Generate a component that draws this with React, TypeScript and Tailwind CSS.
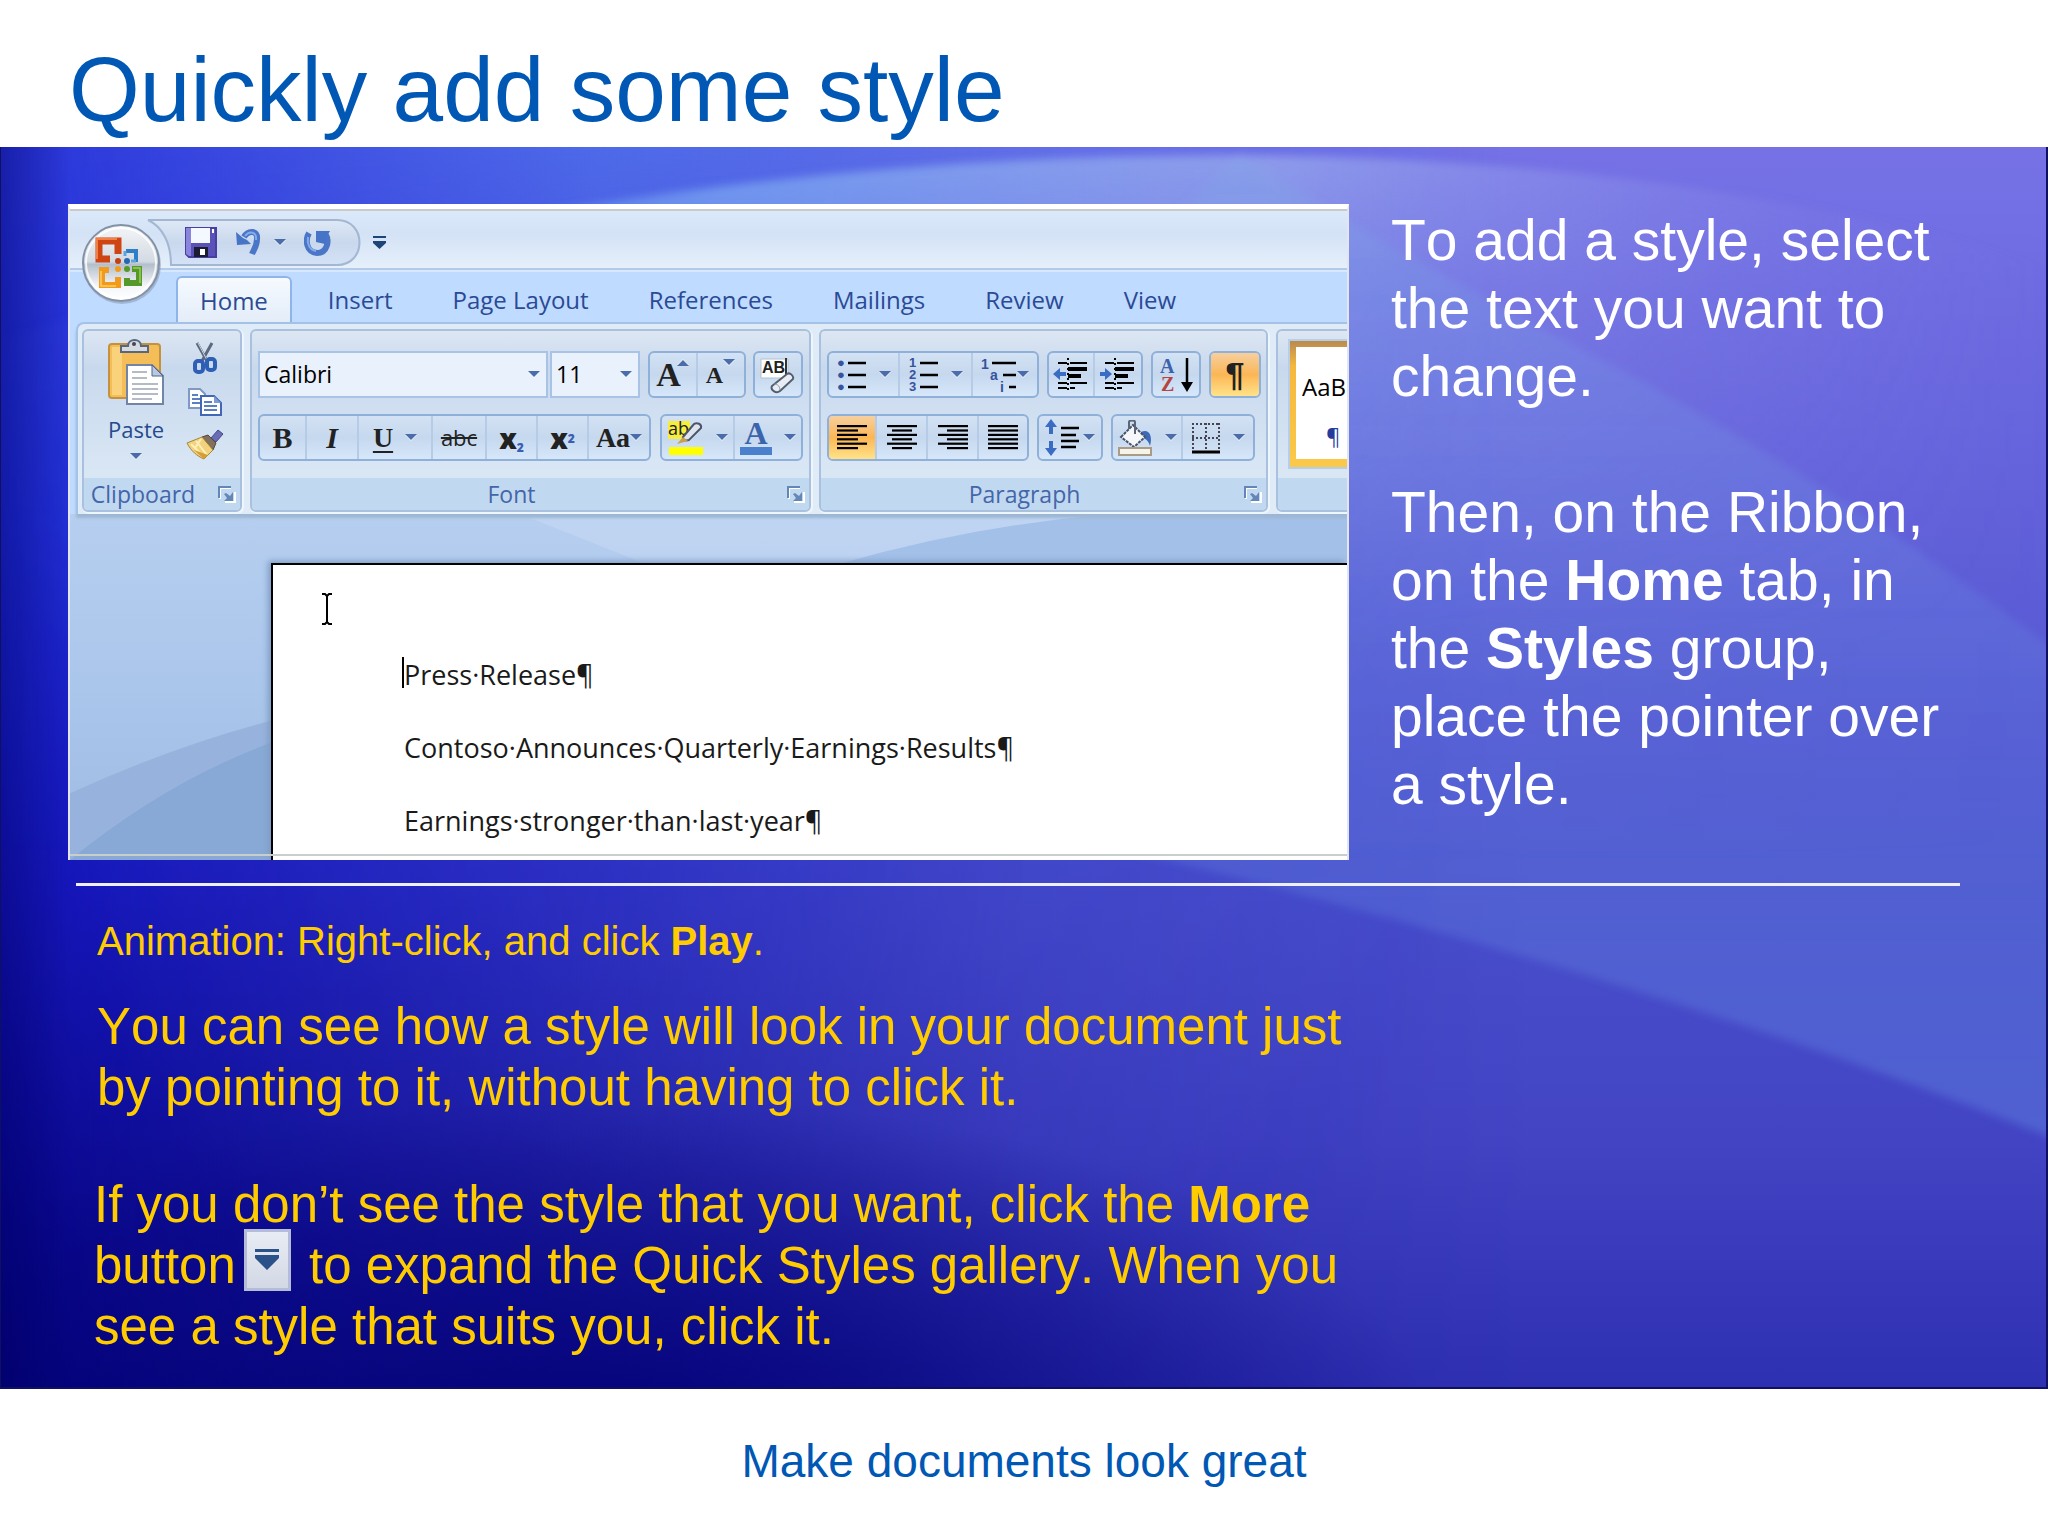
import type { ReactNode } from "react";
import clsx from "clsx";

const tabs = ["Insert", "Page Layout", "References", "Mailings", "Review", "View"];
const lines = ["Press·Release¶", "Contoso·Announces·Quarterly·Earnings·Results¶", "Earnings·stronger·than·last·year¶"];

function Arrow({ className }: { className?: string }) {
  return (
    <svg width="12" height="7" viewBox="0 0 12 7" className={clsx("shrink-0", className)}>
      <path d="M0 1h12L6 7z" fill="#fff" opacity=".7" />
      <path d="M0 0h12L6 6z" fill="#4a6cab" />
    </svg>
  );
}

function Launcher() {
  return (
    <button aria-label="More options">
      <svg width="18" height="17" viewBox="0 0 18 17" fill="none">
        <path d="M2 13V2h11" stroke="#fff" strokeWidth="2" />
        <path d="M1 12V1h12" stroke="#6487b8" strokeWidth="2" />
        <path d="M17 6v10H7" stroke="#fff" strokeWidth="2" />
        <path d="M15 6v9H6l3-3-3-4 2-1 4 3z" fill="#6487b8" />
      </svg>
    </button>
  );
}

function Group({ label, launcher = true, className, children }: { label: string; launcher?: boolean; className: string; children: ReactNode }) {
  return (
    <section
      aria-label={label || "Styles"}
      className={clsx(
        "flex shrink-0 flex-col overflow-hidden rounded-md border-2 border-[#a9c1de] bg-linear-to-b from-[#dde7f3] from-0% via-[#c9d9ed] via-20% to-[#d9e7f5] to-80% shadow-[1px_1px_0_1px_#eef6fd]",
        className
      )}
    >
      <div className="h-[147px]">{children}</div>
      <div className="flex h-8 items-center bg-[#c1d8f1] px-1 text-[#4466a8]">
        <span className="flex-1 pr-5 text-center">{label}</span>
        {launcher && <Launcher />}
      </div>
    </section>
  );
}

function Tools({ children }: { children: ReactNode }) {
  return (
    <div className="flex h-[47px] shrink-0 divide-x-2 divide-[#b5cbe6] overflow-hidden rounded-md border-2 border-[#8fb0d8] bg-linear-to-b from-[#d3e2f4] from-0% via-[#c6d8ee] via-50% to-[#d6e7fa] to-100%">
      {children}
    </div>
  );
}

function Tool({ name, w, on, menu, children }: { name: string; w: string; on?: boolean; menu?: boolean; children: ReactNode }) {
  return (
    <button
      aria-label={name}
      className={clsx(
        "flex shrink-0 items-center justify-center gap-3 font-['Liberation_Serif',serif] font-bold text-[#222]",
        w,
        on && "bg-linear-to-b from-[#f6cf9d] from-0% via-[#fbb654] via-50% to-[#ffe389] to-100%"
      )}
    >
      {children}
      {menu && <Arrow />}
    </button>
  );
}

// horizontal strokes of a paragraph, each one [x, width]
function Bars({ rows }: { rows: number[][] }) {
  return (
    <svg width="30" height="28" viewBox="0 0 30 28">
      {rows.map(([x, w], i) => (
        <rect key={i} x={x} y={1 + i * 4.4} width={w} height="2.200" fill="#000" />
      ))}
    </svg>
  );
}

function Indent({ right }: { right?: boolean }) {
  return (
    <svg width="36" height="36" viewBox="0 0 36 36">
      <path d="M5 6h9M17 6h17M5 26h9M17 26h17M5 31h9M17 31h5" stroke="#000" strokeWidth="2" />
      <path d="M15 1v34" stroke="#000" strokeWidth="2" strokeDasharray="2 3" />
      <path d="M15 10h19v4H15zM15 17h13v4H15z" fill="#000" />
      {right ? <path d="M12 17L5 11v4H0v4h5v4z" fill="#3a6cc4" /> : <path d="M0 17l7-6v4h6v4H7v4z" fill="#3a6cc4" />}
    </svg>
  );
}

function SaveIcon() {
  return (
    <svg width="32" height="31" viewBox="0 0 32 31">
      <path d="M1 1h30v29H4l-3-3z" fill="#5a52b8" stroke="#4840a0" strokeWidth="2" />
      <path d="M1 1h5v28H4l-3-2z" fill="#8a84dc" />
      <path d="M6 1h19v15H6z" fill="#f4f8ff" />
      <path d="M9 20h14v10H9z" fill="#1c1c30" />
      <path d="M15 22h5v6h-5z" fill="#fff" />
      <path d="M27 2h2v4h-2z" fill="#fff" />
    </svg>
  );
}

function UndoIcon() {
  return (
    <svg width="27" height="29" viewBox="0 0 27 29" fill="none">
      <path d="M9 9C13 2 23 2 22 11c0 7-3 10-5 15" stroke="#4a76c8" strokeWidth="6" />
      <path d="M10 8C14 3 22 3 21 12" stroke="#86abea" strokeWidth="2" />
      <path d="M1 4l1 13 14-1-4-4-4-2z" fill="#4674c6" />
    </svg>
  );
}

function RedoIcon() {
  return (
    <svg width="28" height="28" viewBox="0 0 28 28" fill="none">
      <path d="M5 4C1 11 2 23 13 24c11 0 12-13 9-18" stroke="#4a76c8" strokeWidth="6" />
      <path d="M4 8C3 14 5 21 12 22" stroke="#86abea" strokeWidth="2" />
      <path d="M12 2h14l-3 5-2 8-9-2z" fill="#4674c6" />
    </svg>
  );
}

function OfficeOrb() {
  return (
    <svg width="82" height="84" viewBox="0 0 82 84">
      <defs>
        <linearGradient id="orb" x1="0" y1="0" x2="0" y2="1">
          <stop offset="0" stopColor="#f4f6f8" />
          <stop offset=".48" stopColor="#d3dae2" />
          <stop offset=".52" stopColor="#b4bfcc" />
          <stop offset=".8" stopColor="#f4f6f9" />
          <stop offset="1" stopColor="#fff" />
        </linearGradient>
      </defs>
      <circle cx="42" cy="43" r="39" fill="#7d8ba0" opacity=".45" />
      <circle cx="41" cy="41" r="38" fill="url(#orb)" stroke="#8391a6" strokeWidth="2" />
      <circle cx="41" cy="41" r="35" fill="none" stroke="#fff" strokeWidth="2" opacity=".8" />
      <g fill="none">
        <path d="M30 37H19V19h19v13" stroke="#cf4413" strokeWidth="7" />
        <path d="M17 37V17h20" stroke="#f08044" strokeWidth="2" />
        <path d="M46 29h10v11" stroke="#2f7fc8" strokeWidth="4" />
        <path d="M45 29v5M56 39h-5" stroke="#5aa4e0" strokeWidth="3" />
        <path d="M29 48H22v15h16V55" stroke="#f29a1c" strokeWidth="6" />
        <path d="M21 49v15h15" stroke="#ffd060" strokeWidth="1.500" />
        <path d="M52 47h7v14H47v-5" stroke="#55992b" strokeWidth="6" />
        <path d="M53 46h7v15" stroke="#9ccc58" strokeWidth="1.500" />
      </g>
      <circle cx="38" cy="39" r="3" fill="#c63f12" />
      <circle cx="47" cy="39" r="3" fill="#2468b4" />
      <circle cx="38" cy="47" r="3" fill="#f29a1c" />
      <circle cx="47" cy="47" r="3" fill="#55992b" />
    </svg>
  );
}

function PasteIcon() {
  return (
    <svg width="56" height="66" viewBox="0 0 56 66">
      <rect x="1" y="5" width="51" height="54" rx="3" fill="#f4bd57" stroke="#c4923c" strokeWidth="2" />
      <path d="M4 8h10v48H4z" fill="#fbd27c" />
      <path d="M13 13V7h7c0-8 13-8 13 0h7v6z" fill="#d6dbe2" stroke="#58677d" strokeWidth="2" />
      <circle cx="26" cy="5" r="2" fill="#445" />
      <path d="M19 26h25l11 11v28H19z" fill="#fff" stroke="#7385a6" strokeWidth="2" />
      <path d="M44 26v11h11z" fill="#b8c8e0" stroke="#51658a" />
      <path d="M24 33h15M24 39h15M24 45h26M24 50h26M24 55h26M24 60h20" stroke="#b4bac6" strokeWidth="2" />
    </svg>
  );
}

function CutIcon() {
  return (
    <svg width="24" height="34" viewBox="0 0 24 34" fill="none">
      <path d="M4 2l10 18M19 2L9 20" stroke="#5c6a80" strokeWidth="3" />
      <path d="M5 2l9 17" stroke="#cdd5e0" strokeWidth="1" />
      <rect x="2" y="20" width="8" height="11" rx="3" stroke="#2f5fb4" strokeWidth="4" />
      <rect x="14" y="18" width="8" height="11" rx="3" stroke="#2f5fb4" strokeWidth="4" />
    </svg>
  );
}

function CopyIcon() {
  return (
    <svg width="34" height="28" viewBox="0 0 34 28" strokeWidth="2">
      <path d="M1 1h11l5 5v14H1z" fill="#fff" stroke="#8098c4" />
      <path d="M4 7h6M4 11h8M4 15h8" stroke="#5a80c4" />
      <path d="M13 8h13l7 7v12H13z" fill="#fff" stroke="#4068b4" />
      <path d="M16 14h8M16 18h13M16 22h13" stroke="#5a80c4" />
      <path d="M26 8v7h7z" fill="#7c9cd4" />
    </svg>
  );
}

function PainterIcon() {
  return (
    <svg width="38" height="31" viewBox="0 0 38 31">
      <path d="M25 9l7-8 5 4-7 8z" fill="#6a6cb4" stroke="#44488c" />
      <path d="M16 8l6-2 8 8-3 7z" fill="#80705c" stroke="#54483c" />
      <path d="M1 14l15-6 11 13-9 9c-7-3-13-8-17-16z" fill="#f2d27c" stroke="#a88438" />
      <path d="M5 15l9 9M10 12l11 14M15 10l-6 9" stroke="#fff0b8" strokeWidth="2" />
      <path d="M8 21l10 9 4-4z" fill="#d49e34" />
    </svg>
  );
}

function ClearIcon() {
  return (
    <svg width="36" height="38" viewBox="0 0 36 38">
      <path d="M1 3h27v19H1z" fill="#fff" stroke="#b4c0d0" />
      <path d="M26 2v20" stroke="#333" strokeWidth="2" />
      <text x="2" y="17" fontSize="16" fontWeight="bold" fontFamily="Liberation Sans, sans-serif" fill="#222">AB</text>
      <path d="M12 30L27 18c3-2 7 2 6 5L20 35c-4 3-10-1-8-5z" fill="#e9edf3" stroke="#545e70" strokeWidth="2" />
      <path d="M14 28c4 0 6 3 6 6" stroke="#8893a6" fill="none" />
    </svg>
  );
}

function HighlightIcon() {
  return (
    <svg width="36" height="36" viewBox="0 0 36 36">
      <path d="M0 1h22v18H0z" fill="#f6ee3c" />
      <text x="0" y="15" fontSize="18" fontFamily="Open Sans, sans-serif" fontWeight="normal" fill="#222">ab</text>
      <path d="M15 17L26 4c3-2 8 0 7 4L21 20c-3 1-7 0-6-3z" fill="#dfe5ee" stroke="#4c566a" strokeWidth="2" />
      <path d="M9 24l6-7 5 4z" fill="#c8a050" />
      <path d="M1 27h34v8H1z" fill="#ffff00" />
    </svg>
  );
}

function ListIcon({ marks }: { marks: string[] }) {
  return (
    <svg width="30" height="36" viewBox="0 0 30 36">
      {marks.map((m, i) => (
        <text key={i} x="0" y={10 + i * 12} fontSize="13" fontWeight="bold" fontFamily="Liberation Sans, sans-serif" fill="#36539e">{m}</text>
      ))}
      <path d="M11 6h18M11 18h18M11 30h18" stroke="#000" strokeWidth="2.500" />
    </svg>
  );
}

function MultiListIcon() {
  return (
    <svg width="36" height="36" viewBox="0 0 36 36" fontSize="14" fontWeight="bold" fontFamily="Liberation Sans, sans-serif" fill="#36539e">
      <text x="0" y="12">1</text>
      <text x="9" y="23">a</text>
      <text x="19" y="35">i</text>
      <path d="M11 6h24M22 18h13M28 30h7" stroke="#000" strokeWidth="2.500" />
    </svg>
  );
}

function SortIcon() {
  return (
    <svg width="34" height="36" viewBox="0 0 34 36" fontSize="20" fontWeight="bold" fontFamily="Liberation Serif, serif">
      <text x="1" y="16" fill="#3b62ad">A</text>
      <text x="2" y="34" fill="#b5433f">Z</text>
      <path d="M28 1v28" stroke="#000" strokeWidth="2.500" />
      <path d="M22 25h12l-6 10z" fill="#000" />
    </svg>
  );
}

function SpacingIcon() {
  return (
    <svg width="34" height="38" viewBox="0 0 34 38">
      <path d="M6 0l6 8H8v7H4V8H0zM6 37l6-8H8v-7H4v7H0z" fill="#3a6cc4" />
      <path d="M16 9h18M16 16h15M16 22h18M16 28h15" stroke="#000" strokeWidth="2.500" />
    </svg>
  );
}

function BucketIcon() {
  return (
    <svg width="36" height="36" viewBox="0 0 36 36">
      <path d="M24 12c8-4 12 4 9 14-1-5-5-8-9-9z" fill="#3c6ab8" />
      <path d="M4 17L16 5l12 12-11 10z" fill="#f5f7fa" stroke="#46536a" strokeWidth="2" strokeDasharray="3 1" />
      <path d="M12 9V2c0-2 6-2 6 0v12" fill="none" stroke="#5c6678" strokeWidth="2" />
      <path d="M2 28h32v7H2z" fill="#f6f3ea" stroke="#a89c84" strokeWidth="2" />
    </svg>
  );
}

function BorderIcon() {
  return (
    <svg width="30" height="32" viewBox="0 0 30 32" stroke="#445" strokeWidth="2" fill="none">
      <path d="M1 2h28M1 16h28M2 1v26M15 1v26M28 1v26" strokeDasharray="2 2" />
      <path d="M1 30h28" stroke="#000" strokeWidth="3" />
    </svg>
  );
}

function MoreGlyph({ className }: { className?: string }) {
  return (
    <svg width="13" height="14" viewBox="0 0 13 14" className={className}>
      <path d="M0 1h13v2H0zM0 6h13v2L6.500 14 0 8z" fill="#1d4578" />
    </svg>
  );
}

function Ribbon() {
  return (
    <div className="relative z-10 ml-1.5 flex gap-2 rounded-tl-lg border-t-2 border-l-2 border-[#a4c2e8] bg-[#dfebf7] pt-[5px] pb-0.5 pl-1 shadow-[0_4px_3px_#9db7d3]">
      <Group label="Clipboard" className="w-[160px]">
        <div className="flex justify-between pt-2 pr-4 pl-6">
          <button className="flex flex-col items-center text-[#264a8c]">
            <PasteIcon />
            <span className="mt-2 text-[22px] leading-8">Paste</span>
            <Arrow className="mt-2" />
          </button>
          <div className="flex flex-col items-center justify-between pt-0.5">
            <button aria-label="Cut"><CutIcon /></button>
            <button aria-label="Copy"><CopyIcon /></button>
            <button aria-label="Format Painter"><PainterIcon /></button>
          </div>
        </div>
      </Group>

      <Group label="Font" className="w-[561px]">
        <div className="flex flex-col gap-4 px-1.5 pt-5">
          <div className="flex justify-between">
            <div className="flex gap-0.5">
              <label className="relative flex items-center">
                <select aria-label="Font name" className="h-[47px] w-[290px] appearance-none border-2 border-[#a9c3e6] bg-[#e9f1fc] pl-1 text-black">
                  <option>Calibri</option>
                </select>
                <Arrow className="pointer-events-none absolute right-2" />
              </label>
              <label className="relative flex items-center">
                <select aria-label="Font size" className="h-[47px] w-[90px] appearance-none border-2 border-[#a9c3e6] bg-[#e9f1fc] pl-1 text-black">
                  <option>11</option>
                </select>
                <Arrow className="pointer-events-none absolute right-2" />
              </label>
            </div>
            <Tools>
              <Tool name="Grow Font" w="w-12">
                <span className="flex items-start text-[34px] leading-9">A<Arrow className="-ml-1 mt-0.5 rotate-180" /></span>
              </Tool>
              <Tool name="Shrink Font" w="w-[46px]">
                <span className="flex items-start text-[24px] leading-10">A<Arrow className="mt-1" /></span>
              </Tool>
            </Tools>
            <Tools>
              <Tool name="Clear Formatting" w="w-[46px]"><ClearIcon /></Tool>
            </Tools>
          </div>
          <div className="flex justify-between">
            <Tools>
              <Tool name="Bold" w="w-[47px]"><span className="text-[30px]">B</span></Tool>
              <Tool name="Italic" w="w-[52px]"><span className="text-[30px] italic">I</span></Tool>
              <Tool name="Underline" w="w-[74px]" menu><span className="text-[28px] underline underline-offset-4">U</span></Tool>
              <Tool name="Strikethrough" w="w-[54px]"><span className="font-['Open_Sans',sans-serif] text-[22px] font-medium line-through">abc</span></Tool>
              <Tool name="Subscript" w="w-[51px]">
                <span className="font-['Open_Sans',sans-serif] text-[28px] leading-8 font-extrabold">x<sub className="text-[12px] text-[#3a5fb0]">2</sub></span>
              </Tool>
              <Tool name="Superscript" w="w-[51px]">
                <span className="font-['Open_Sans',sans-serif] text-[28px] leading-8 font-extrabold">x<sup className="text-[12px] text-[#3a5fb0]">2</sup></span>
              </Tool>
              <Tool name="Change Case" w="w-[60px]"><span className="flex items-center text-[28px]">Aa<Arrow /></span></Tool>
            </Tools>
            <Tools>
              <Tool name="Text Highlight Color" w="w-[73px]" menu><HighlightIcon /></Tool>
              <Tool name="Font Color" w="w-[66px]" menu>
                <span className="border-b-8 border-[#4a80cc] px-1 text-[32px] leading-[27px] text-[#3a64ac]">A</span>
              </Tool>
            </Tools>
          </div>
        </div>
      </Group>

      <Group label="Paragraph" className="w-[449px]">
        <div className="flex flex-col gap-4 px-1.5 pt-5">
          <div className="flex gap-2">
            <Tools>
              <Tool name="Bullets" w="w-[71px]" menu><ListIcon marks={["●", "●", "●"]} /></Tool>
              <Tool name="Numbering" w="w-[73px]" menu><ListIcon marks={["1", "2", "3"]} /></Tool>
              <Tool name="Multilevel List" w="w-[64px]"><span className="flex items-center"><MultiListIcon /><Arrow /></span></Tool>
            </Tools>
            <Tools>
              <Tool name="Decrease Indent" w="w-[46px]"><Indent /></Tool>
              <Tool name="Increase Indent" w="w-[46px]"><Indent right /></Tool>
            </Tools>
            <Tools>
              <Tool name="Sort" w="w-[46px]"><SortIcon /></Tool>
            </Tools>
            <Tools>
              <Tool name="Show Marks" w="w-12" on><span className="font-['Liberation_Sans',sans-serif] text-[34px]">¶</span></Tool>
            </Tools>
          </div>
          <div className="flex gap-2">
            <Tools>
              <Tool name="Align Left" w="w-12" on><Bars rows={[[0, 30], [0, 21], [0, 30], [0, 21], [0, 30], [0, 21]]} /></Tool>
              <Tool name="Center" w="w-[51px]"><Bars rows={[[0, 30], [5, 20], [0, 30], [5, 20], [0, 30], [5, 20]]} /></Tool>
              <Tool name="Align Right" w="w-[51px]"><Bars rows={[[0, 30], [9, 21], [0, 30], [9, 21], [0, 30], [9, 21]]} /></Tool>
              <Tool name="Justify" w="w-12"><Bars rows={[[0, 30], [0, 30], [0, 30], [0, 30], [0, 30], [0, 30]]} /></Tool>
            </Tools>
            <Tools>
              <Tool name="Line Spacing" w="w-[62px]"><span className="flex items-center gap-1"><SpacingIcon /><Arrow /></span></Tool>
            </Tools>
            <Tools>
              <Tool name="Shading" w="w-[70px]" menu><BucketIcon /></Tool>
              <Tool name="Borders" w="w-[70px]" menu><BorderIcon /></Tool>
            </Tools>
          </div>
        </div>
      </Group>

      <Group label="" launcher={false} className="w-[240px]">
        <div className="pt-2 pl-2.5">
          <button className="flex h-[130px] w-[180px] flex-col border-2 border-[#b8cde6] bg-linear-to-b from-[#b98b4e] from-0% via-[#f5b83c] via-20% to-[#fbc94a] to-100% pt-1.5 pb-2 pl-1.5 text-left text-black">
            <span className="flex flex-1 flex-col justify-between bg-white pt-6 pb-3 pl-1.5">
              <span className="text-[24px] leading-8">AaBbCc</span>
              <span className="pl-6 text-[22px] leading-6 text-[#263c9c]">¶ Normal</span>
            </span>
          </button>
        </div>
      </Group>
    </div>
  );
}

function WordWindow() {
  return (
    <div className="relative min-w-0 overflow-hidden border-2 border-t-[5px] border-b-0 border-[#e4e6ef] border-t-white bg-[#bfdbff] font-['Open_Sans','Noto_Sans',sans-serif] text-[23px]">
      <div className="flex h-[61px] items-start gap-3 border-t-2 border-b-2 border-t-[#c8cacc] border-b-[#b3cbeb] bg-linear-to-b from-[#dbe9fb] from-0% via-[#d3e2f5] via-40% to-[#e6f0fb] to-100% pl-[77px]">
        <div className="relative mt-2 flex h-[47px] w-[214px] items-center">
          <svg className="absolute inset-0" width="214" height="47" viewBox="0 0 214 47">
            <defs>
              <linearGradient id="qat" x1="0" y1="0" x2="0" y2="1">
                <stop offset="0" stopColor="#dfe9f6" />
                <stop offset=".5" stopColor="#c9d8ec" />
                <stop offset="1" stopColor="#d3e2f6" />
              </linearGradient>
            </defs>
            <path d="M1 1h189c30 0 30 45 0 45H24C24 25 16 8 1 1z" fill="url(#qat)" stroke="#a3b7d2" strokeWidth="2" />
          </svg>
          <div className="relative flex items-center pl-[38px]">
            <button aria-label="Save"><SaveIcon /></button>
            <button aria-label="Undo" className="ml-[18px] flex items-center gap-3"><UndoIcon /><Arrow /></button>
            <button aria-label="Redo" className="ml-[18px]"><RedoIcon /></button>
          </div>
        </div>
        <button aria-label="Customize Quick Access Toolbar" className="mt-6"><MoreGlyph /></button>
      </div>

      <nav className="flex h-[52px] items-end gap-3 border-t-2 border-[#d8e8fc] pl-[106px] text-[24px] text-[#2b4a94]">
        <button className="-mb-0.5 h-[48px] rounded-t-md border-2 border-b-0 border-[#8fb4ea] bg-linear-to-b from-[#f6faff] to-[#e2ecf8] px-[22px]">Home</button>
        {tabs.map((tab) => (
          <button key={tab} className="h-[45px] px-6">{tab}</button>
        ))}
      </nav>
      <button aria-label="Office Button" className="absolute top-[13px] left-[10px]"><OfficeOrb /></button>

      <Ribbon />

      <div className="relative pt-[49px] pl-[201px]">
        <svg className="absolute inset-0 h-full w-full" viewBox="0 0 1277 347" preserveAspectRatio="none">
          <defs>
            <linearGradient id="desk" x1="0" y1="0" x2="0" y2="1">
              <stop offset="0" stopColor="#b6cff0" />
              <stop offset=".5" stopColor="#abc6eb" />
              <stop offset="1" stopColor="#9dbae2" />
            </linearGradient>
          </defs>
          <path d="M0 0h1277v347H0z" fill="url(#desk)" />
          <path d="M450 0H1040Q900 20 780 60H600z" fill="#c8daf3" opacity=".5" />
          <path d="M770 50Q900 12 1040 0h237v60H770z" fill="#a3c0e8" />
          <path d="M0 280Q110 230 210 205V347H0z" fill="#97b3dd" />
          <path d="M0 347Q100 265 210 226V347z" fill="#88a9d5" />
        </svg>
        <article className="relative h-[297px] border-t-2 border-l-2 border-black bg-white pt-[73px] pl-[131px] text-[27px] leading-[73px] text-[#1a1a1a] shadow-[-3px_-2px_6px_#7f9cc4]">
          <svg className="absolute top-7 left-[48px]" width="12" height="32" viewBox="0 0 12 32" fill="none" stroke="#000" strokeWidth="2">
            <path d="M1 1h3l2 2 2-2h3M6 3v26M1 31h3l2-2 2 2h3" />
          </svg>
          <span className="absolute top-[92px] left-[129px] h-[31px] w-0.5 bg-black" />
          {lines.map((line, i) => (
            <p key={i} className="whitespace-nowrap">{line}</p>
          ))}
        </article>
        <div className="absolute inset-x-0 bottom-1 h-0.5 bg-[#c9cdcc]" />
      </div>
    </div>
  );
}

function Backdrop() {
  return (
    <svg className="absolute inset-0 h-full w-full" viewBox="0 0 2048 1241" preserveAspectRatio="none">
      <defs>
        <linearGradient id="left" x1="0" y1="0" x2="0" y2="1">
          <stop offset="0" stopColor="#2834da" />
          <stop offset=".3" stopColor="#1e2ad4" />
          <stop offset=".6" stopColor="#1414b8" />
          <stop offset=".85" stopColor="#08068c" />
          <stop offset="1" stopColor="#04027a" />
        </linearGradient>
        <linearGradient id="right" x1="0" y1="0" x2="0" y2="1">
          <stop offset="0" stopColor="#7672e6" />
          <stop offset=".25" stopColor="#6664dc" />
          <stop offset=".58" stopColor="#4a50cc" />
          <stop offset=".8" stopColor="#4244c4" />
          <stop offset="1" stopColor="#2e30b2" />
        </linearGradient>
        <linearGradient id="fade" x1="0" y1="0" x2="1" y2="0">
          <stop offset="0" stopColor="#000" />
          <stop offset=".25" stopColor="#606060" />
          <stop offset=".5" stopColor="#d4d4d4" />
          <stop offset=".75" stopColor="#fff" />
          <stop offset="1" stopColor="#fff" />
        </linearGradient>
        <mask id="toRight"><path d="M0 0h2048v1241H0z" fill="url(#fade)" /></mask>
        <radialGradient id="pool" cx=".3" cy="1.050" r=".4">
          <stop offset="0" stopColor="#04027a" stopOpacity=".95" />
          <stop offset=".5" stopColor="#04027a" stopOpacity=".5" />
          <stop offset="1" stopColor="#04027a" stopOpacity="0" />
        </radialGradient>
        <linearGradient id="sky" x1="0" y1="0" x2="1" y2="0">
          <stop offset="0" stopColor="#3c6cf0" stopOpacity=".1" />
          <stop offset=".35" stopColor="#84b4f4" stopOpacity=".7" />
          <stop offset=".62" stopColor="#a8bcee" stopOpacity=".6" />
          <stop offset="1" stopColor="#8884ea" stopOpacity="0" />
        </linearGradient>
        <linearGradient id="down" x1="0" y1="0" x2="0" y2="1">
          <stop offset="0" stopColor="#fff" />
          <stop offset=".12" stopColor="#888" />
          <stop offset=".4" stopColor="#111" />
          <stop offset="1" stopColor="#000" />
        </linearGradient>
        <mask id="fromTop"><path d="M0 0h2048v1241H0z" fill="url(#down)" /></mask>
        <linearGradient id="band" x1="0" y1="0" x2="0" y2="1">
          <stop offset="0" stopColor="#80a8e8" stopOpacity=".3" />
          <stop offset=".6" stopColor="#6484e0" stopOpacity=".24" />
          <stop offset="1" stopColor="#6084e0" stopOpacity=".45" />
        </linearGradient>
        <linearGradient id="edge" x1="0" y1="0" x2="1" y2="0">
          <stop offset="0" stopColor="#000060" stopOpacity=".4" />
          <stop offset="1" stopColor="#000060" stopOpacity="0" />
        </linearGradient>
        <linearGradient id="glow" x1="0" y1="0" x2="1" y2="0">
          <stop offset="0" stopColor="#4870f4" stopOpacity="0" />
          <stop offset=".4" stopColor="#5080f0" stopOpacity=".55" />
          <stop offset="1" stopColor="#5080f0" stopOpacity="0" />
        </linearGradient>
        <filter id="soft"><feGaussianBlur stdDeviation="4" /></filter>
      </defs>
      <path d="M0 0h2048v1241H0z" fill="url(#left)" />
      <path d="M0 0h2048v1241H0z" fill="url(#right)" mask="url(#toRight)" />
      <path d="M0 0h1500v1241H0z" fill="url(#glow)" mask="url(#fromTop)" />
      <path d="M0 400h2048v841H0z" fill="url(#pool)" />
      <g mask="url(#fromTop)">
        <path d="M0 190Q300 110 575 60Q900 8 1240 8Q1700 12 2048 120V700H0z" fill="url(#sky)" filter="url(#soft)" />
      </g>
      <path d="M1240 8L1340 70L1534 178Q1800 310 2060 506V993Q1650 830 1168 713L600 600z" fill="url(#band)" filter="url(#soft)" />
      <path d="M0 0h70v1241H0z" fill="url(#edge)" />
      <path d="M0 0v1241M2047 0v1241M0 1240h2048" stroke="#101060" strokeWidth="2" fill="none" />
    </svg>
  );
}

export default function App() {
  return (
    <div className="flex min-h-screen flex-col bg-white font-['Liberation_Sans',Arial,sans-serif] [font-kerning:none]">
      <header className="px-[69px] pt-10 pb-[7px]">
        <h1 className="text-[91px] leading-[100px] text-[#0058b4]">Quickly add some style</h1>
      </header>

      <main className="relative flex-1 pt-[57px] pb-8">
        <Backdrop />
        <div className="relative">
          <div className="grid grid-cols-[1281fr_569fr] items-start gap-[42px] pr-[88px] pl-[68px]">
            <WordWindow />
            <aside className="pt-0.5 text-[57px] leading-[68px] text-white">
              <p className="mb-[68px]">To add a style, select the text you want to change.</p>
              <p>
                Then, on the Ribbon, on the <b>Home</b> tab, in the <b>Styles</b> group, place the pointer over a style.
              </p>
            </aside>
          </div>
          <hr className="mt-[23px] mr-[88px] ml-[76px] border-t-[3px] border-[#eeeefc]" />
          <div className="max-w-[1390px] text-[51px] leading-[61px] text-[#ffcc00]">
            <div className="pr-5 pl-[97px]">
              <p className="mt-[31px] text-[40px] leading-[48px]">
                Animation: Right-click, and click <b>Play</b>.
              </p>
              <p className="mt-[31px]">You can see how a style will look in your document just by pointing to it, without having to click it.</p>
            </div>
            <p className="mt-14 pr-5 pl-[94px]">
              If you don’t see the style that you want, click the <b>More</b> button
              <button aria-label="More" className="-my-4 mr-1 ml-2 inline-flex h-[62px] w-[47px] items-center justify-center border-3 border-[#b4bcd8] bg-linear-to-b from-[#e8ecf4] to-[#d2d8e4] align-[12px]">
                <svg width="24" height="22" viewBox="0 0 24 22">
                  <path d="M0 0h24v3H0zM0 6h24v3L12 21 0 9z" fill="#2a5288" />
                </svg>
              </button>{" "}
              to expand the Quick Styles gallery. When you see a style that suits you, click it.
            </p>
          </div>
        </div>
      </main>

      <footer className="pt-[45px] pb-[49px] text-center text-[46px] leading-[54px] text-[#0058b4]">Make documents look great</footer>
    </div>
  );
}
